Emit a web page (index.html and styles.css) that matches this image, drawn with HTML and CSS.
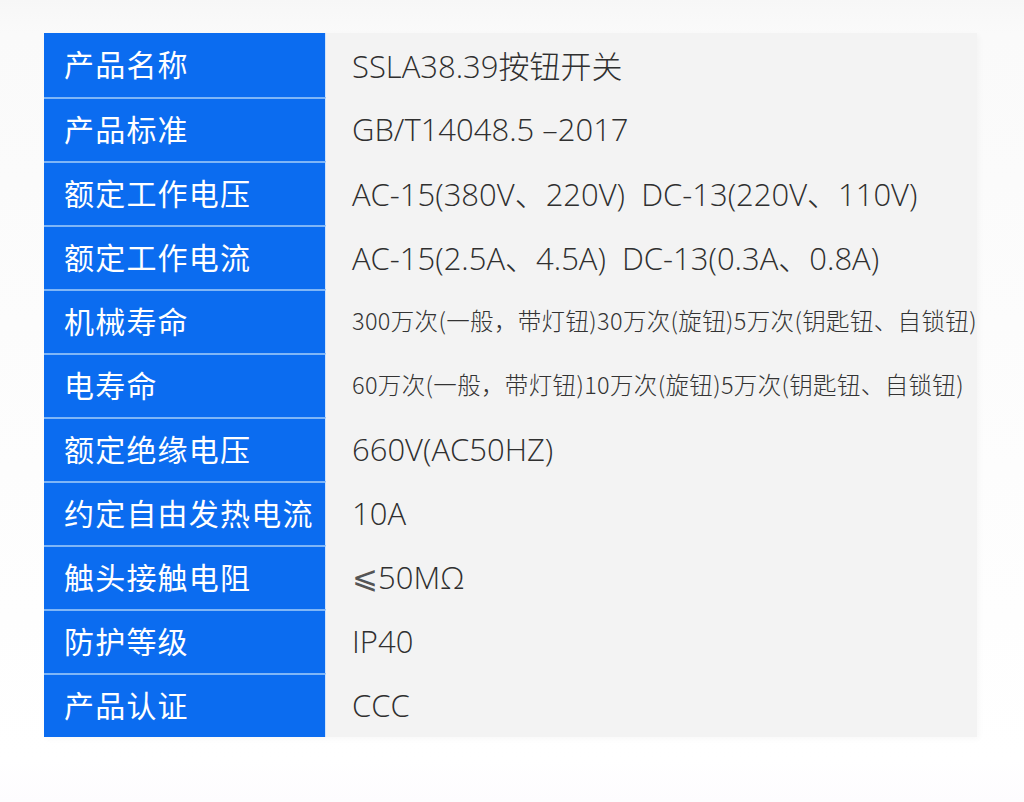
FILE: index.html
```html
<!DOCTYPE html>
<html lang="zh-CN">
<head>
<meta charset="utf-8">
<title>SSLA38.39按钮开关 参数</title>
<link rel="stylesheet" href="styles.css">
</head>
<body>
<div class="page">
  <div class="spec">
    <div class="row"><div class="label">产品名称</div><div class="value">SSLA38.39按钮开关</div></div>
    <div class="row"><div class="label">产品标准</div><div class="value">GB/T14048.5 –2017</div></div>
    <div class="row"><div class="label">额定工作电压</div><div class="value">AC-15(380V、220V)&nbsp; DC-13(220V、110V)</div></div>
    <div class="row"><div class="label">额定工作电流</div><div class="value">AC-15(2.5A、4.5A)&nbsp; DC-13(0.3A、0.8A)</div></div>
    <div class="row"><div class="label">机械寿命</div><div class="value small">300万次(一般，带灯钮)30万次(旋钮)5万次(钥匙钮、自锁钮)</div></div>
    <div class="row"><div class="label">电寿命</div><div class="value small">60万次(一般，带灯钮)10万次(旋钮)5万次(钥匙钮、自锁钮)</div></div>
    <div class="row"><div class="label">额定绝缘电压</div><div class="value">660V(AC50HZ)</div></div>
    <div class="row"><div class="label">约定自由发热电流</div><div class="value">10A</div></div>
    <div class="row"><div class="label">触头接触电阻</div><div class="value"><span class="sym">⩽</span>50MΩ</div></div>
    <div class="row"><div class="label">防护等级</div><div class="value">IP40</div></div>
    <div class="row"><div class="label">产品认证</div><div class="value">CCC</div></div>
  </div>
</div>
</body>
</html>
```
FILE: styles.css
```css
html, body {
  margin: 0;
  padding: 0;
}
body {
  background: #fbfbfb;
  font-family: "Noto Sans CJK SC", "Noto Sans", sans-serif;
}
.page {
  width: 1024px;
  height: 802px;
  box-sizing: border-box;
  padding: 33px 0 0 44px;
  background: linear-gradient(#f7f7f7 0, #fafafa 33px, #ffffff 760px, #fdfcfe 802px);
}
.spec {
  width: 933px;
  background: #f3f3f3;
  box-shadow: 2px 2px 6px rgba(0,0,0,0.03);
}
.row {
  display: grid;
  grid-template-columns: 282px 1fr;
  height: 64px;
}
.label {
  background: #0b6cf0;
  color: #ffffff;
  font-size: 30px;
  letter-spacing: 1.2px;
  padding: 0 0 4px 20px;
  display: flex;
  align-items: center;
  border-top: 2px solid #7fb6f7;
  border-right: 1px solid #cfe3fb;
  box-sizing: border-box;
}
.row:first-child .label {
  border-top: none;
}
.value {
  color: #2f2f2f;
  font-family: "Open Sans", "Noto Sans CJK SC", sans-serif;
  font-weight: 300;
  font-size: 31px;
  padding: 0 0 1px 26px;
  display: flex;
  align-items: center;
  white-space: nowrap;
}
.value.small {
  color: #333333;
  font-family: "Noto Sans CJK SC", sans-serif;
  font-weight: 300;
  font-size: 23.5px;
  letter-spacing: 0.35px;
  padding-bottom: 2px;
}
.sym {
  font-family: "DejaVu Sans", "Noto Sans CJK SC", sans-serif;
  font-weight: 300;
  color: #555555;
}
```
